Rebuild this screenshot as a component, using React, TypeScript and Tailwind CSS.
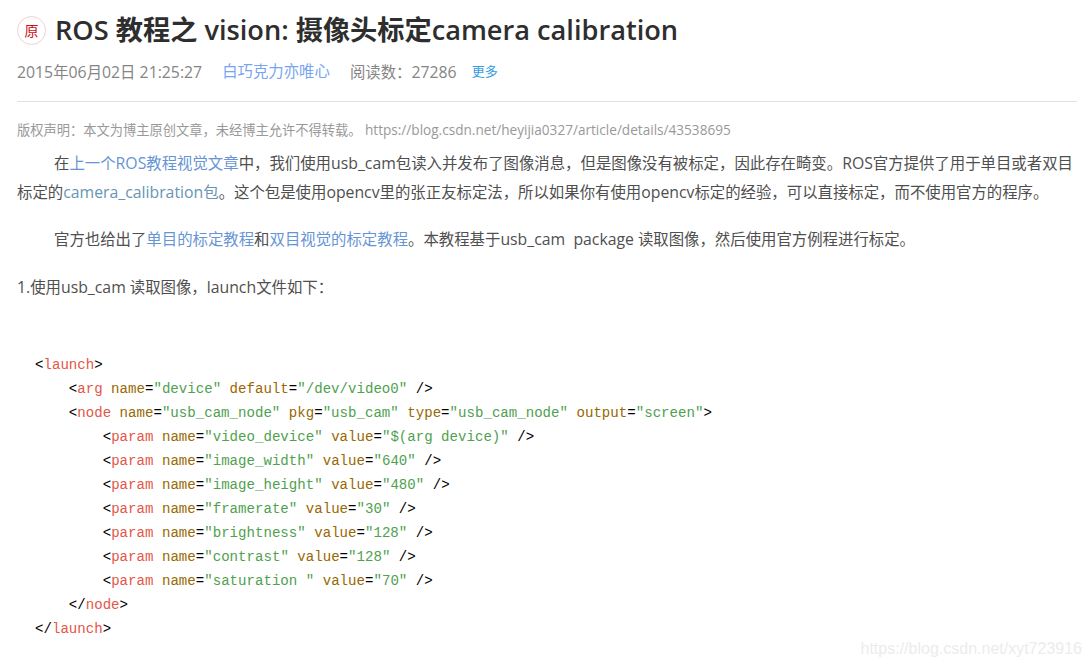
import React from 'react';

const sans = "font-['Open_Sans','Noto_Sans_CJK_SC',sans-serif]";

type Attr = [string, string];

interface TagProps {
    indent: number;
    name: string;
    attrs?: Attr[];
    end?: string;
}

const indents: Record<number, string> = { 0: 'pl-0', 1: 'pl-[33.8px]', 2: 'pl-[67.7px]' };

// latin runs come out a bit wider than the CJK size in the body text
function L({ children }: { children: React.ReactNode }) {
    return <span className="text-[15.8px]">{children}</span>;
}

function Tag({ indent, name, attrs = [], end = '>' }: TagProps) {
    return (
        <div className={`h-6 leading-6 whitespace-pre ${indents[indent]}`}>
            <span className="text-black">{end === 'close' ? '</' : '<'}</span>
            <span className="text-[#e45649]">{name}</span>
            {attrs.map(([k, v]) => (
                <span key={k}>
                    {' '}
                    <span className="text-[#986801]">{k}</span>
                    <span className="text-black">=</span>
                    <span className="text-[#50a14f]">"{v}"</span>
                </span>
            ))}
            <span className="text-black">{end === '/>' ? ' />' : '>'}</span>
        </div>
    );
}

const params: Attr[][] = [
    [['name', 'video_device'], ['value', '$(arg device)']],
    [['name', 'image_width'], ['value', '640']],
    [['name', 'image_height'], ['value', '480']],
    [['name', 'framerate'], ['value', '30']],
    [['name', 'brightness'], ['value', '128']],
    [['name', 'contrast'], ['value', '128']],
    [['name', 'saturation '], ['value', '70']],
];

export default function App() {
    return (
        <div className={`relative h-[667px] w-[1091px] overflow-hidden bg-white pl-[17px] pr-[14px] ${sans}`}>
            <header className="border-b border-[#e0e0e0] h-[102px]">
                <div className="flex items-center gap-[9px] pt-[13px]">
                    <span className="flex h-[29px] w-[29px] items-center justify-center rounded-full border border-[#f5cfd0] text-[14px] text-[#ca0c16]">
                        原
                    </span>
                    <h1 className="text-[27.2px] font-semibold leading-[34px] text-[#2e2e2e]">
                        ROS 教程之 vision: 摄像头标定camera calibration
                    </h1>
                </div>
                <div className="mt-[12px] flex items-center text-[15.4px] leading-6 text-[#858585]">
                    <span><L>2015</L>年<L>06</L>月<L>02</L>日<L> 21:25:27</L></span>
                    <span className="ml-[20px] text-[#78a5f1]">白巧克力亦唯心</span>
                    <span className="ml-[20px]">阅读数：<L>27286</L></span>
                    <span className="mb-[2px] ml-[15px] text-[13px] text-[#349edf]">更多</span>
                </div>
            </header>

            <p className="mt-[18px] text-[13.25px] leading-5 text-[#999999]">
                版权声明：本文为博主原创文章，未经博主允许不得转载。 <span className="text-[13.6px]">https://blog.csdn.net/heyijia0327/article/details/43538695</span>
            </p>

            <div className="text-[15.4px] leading-[29px] text-[#4f4f4f]">
                <p className="mt-[9px] indent-[37px]">
                    在<span className="text-[#6795d4]">上一个<L>ROS</L>教程视觉文章</span>中，我们使用<L>usb_cam</L>包读入并发布了图像消息，但是图像没有被标定，因此存在畸变。<L>ROS</L>官方提供了用于单目或者双目标定的<span className="text-[#6795b5]"><L>camera_calibration</L>包</span>。这个包是使用<L>opencv</L>里的张正友标定法，所以如果你有使用<L>opencv</L>标定的经验，可以直接标定，而不使用官方的程序。
                </p>
                <p className="mt-[18px] indent-[37px] whitespace-pre">
                    官方也给出了<span className="text-[#6795d4]">单目的标定教程</span>和<span className="text-[#6795d4]">双目视觉的标定教程</span>。本教程基于<L>usb_cam  package</L> 读取图像，然后使用官方例程进行标定。
                </p>
                <p className="mt-[19px]"><L>1.</L>使用<L>usb_cam</L> 读取图像，<L>launch</L>文件如下：</p>
            </div>

            <pre className="mt-[51px] pl-[18px] font-['Liberation_Mono',monospace] text-[14.1px] leading-6">
                <Tag indent={0} name="launch" />
                <Tag indent={1} name="arg" attrs={[['name', 'device'], ['default', '/dev/video0']]} end="/>" />
                <Tag indent={1} name="node" attrs={[['name', 'usb_cam_node'], ['pkg', 'usb_cam'], ['type', 'usb_cam_node'], ['output', 'screen']]} />
                {params.map((attrs) => (
                    <Tag key={attrs[0][1]} indent={2} name="param" attrs={attrs} end="/>" />
                ))}
                <Tag indent={1} name="node" end="close" />
                <Tag indent={0} name="launch" end="close" />
            </pre>

            <span className="absolute bottom-[6px] right-[9px] font-['Liberation_Sans',sans-serif] text-[16px] text-[#ececec]">
                https://blog.csdn.net/xyt723916
            </span>
        </div>
    );
}
